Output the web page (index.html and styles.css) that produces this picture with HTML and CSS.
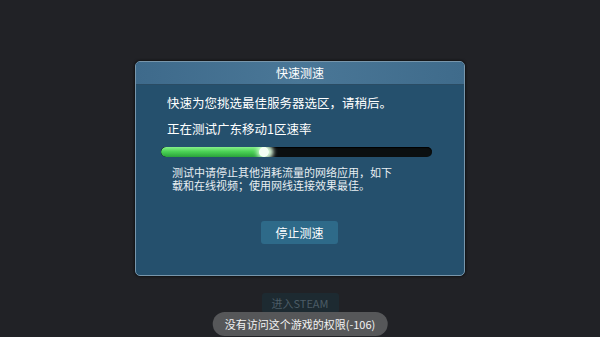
FILE: index.html
```html
<!DOCTYPE html>
<html lang="zh-CN">
<head>
    <meta charset="UTF-8" />
    <title>快速测速</title>
    <link rel="stylesheet" href="styles.css">
</head>
<body>
    <div class="screen">
        <div class="dialog">
            <div class="dialog-title">快速测速</div>
            <div class="dialog-body">
                <p class="line first">快速为您挑选最佳服务器选区，请稍后。</p>
                <p class="line">正在测试广东移动1区速率</p>
                <div class="bar">
                    <div class="bar-fill" style="width: 40%"></div>
                </div>
                <p class="note">测试中请停止其他消耗流量的网络应用，如下载和在线视频；使用网线连接效果最佳。</p>
                <div class="actions">
                    <button class="btn">停止测速</button>
                </div>
            </div>
        </div>
        <div class="steam">进入STEAM</div>
        <!--提示-->
        <div class="toast">没有访问这个游戏的权限(-106)</div>
    </div>
</body>
</html>
```

FILE: styles.css
```css
*{
    margin:0;
    padding:0;
    box-sizing: border-box;
}
body{
    background-color: #212226;
    font-family: "Noto Sans CJK SC", "Liberation Sans", sans-serif;
    color: #fff;
}
.screen{
    width: 600px;
    height: 337px;
    overflow: hidden;
    position: relative;
    display: flex;
    flex-direction: column;
    align-items: center;
    padding-top: 61px;
}
.dialog{
    width: 330px;
    height: 215px;
    border: solid 1px #7896ab;
    border-radius: 5px;
    background-color: #25506d;
    box-shadow: 0 0 3px #000;
    overflow: hidden;
    display: flex;
    flex-direction: column;
}
.dialog-title{
    height: 23px;
    line-height: 22px;
    text-align: center;
    font-size: 12px;
    background: linear-gradient(to right, #3e6a8b, #4a7797 50%, #3f6b8b);
    border-bottom: solid 1px #2a4c64;
}
.dialog-body{
    flex: 1;
    padding: 9px 32px 0 25px;
    display: flex;
    flex-direction: column;
}
.line{
    font-size: 12.5px;
    line-height: 18px;
    padding-left: 6px;
}
.line.first{
    margin-bottom: 8px;
}
.bar{
    margin-top: 9px;
    height: 10px;
    width: 271px;
    border-radius: 5px;
    background-color: #0b0f10;
    overflow: hidden;
    box-shadow: inset 0 1px 1px #000;
}
.bar-fill{
    height: 100%;
    border-radius: 5px;
    background: linear-gradient(to bottom, #86f08a, #4cd256 45%, #2aa23a);
    box-shadow: 4px 0 5px #e8ffe8;
    position: relative;
}
.bar-fill::after{/*进度条头部的高光*/
    content: "";
    position: absolute;
    right: 0;
    top: 0;
    width: 10px;
    height: 10px;
    border-radius: 50%;
    background-color: #f4fff4;
    box-shadow: 0 0 5px 2px #d8ffd8;
}
.note{
    margin-top: 9px;
    padding-left: 11px;
    width: 234px;
    font-size: 11px;
    line-height: 13px;
    color: #e8eef2;
}
.actions{
    display: flex;
    justify-content: center;
    margin-top: 29px;
    padding-left: 6px;
}
.btn{
    width: 77px;
    height: 23px;
    border: none;
    border-radius: 3px;
    background-color: #2e6a89;
    color: #fff;
    font-family: inherit;
    font-size: 12px;
}
.steam{
    margin-top: 17px;
    width: 77px;
    height: 20px;
    line-height: 20px;
    text-align: center;
    font-size: 11px;
    color: #4c5c66;
    background-color: #1d2a31;
    border-radius: 3px;
}
.toast{
    position: absolute;
    left: 50%;
    transform: translateX(-50%);
    top: 312px;
    height: 24px;
    line-height: 24px;
    padding: 0 12px;
    border-radius: 12px;
    background-color: #565759;
    color: #f2f2f2;
    font-size: 11px;
    white-space: nowrap;
}
```
